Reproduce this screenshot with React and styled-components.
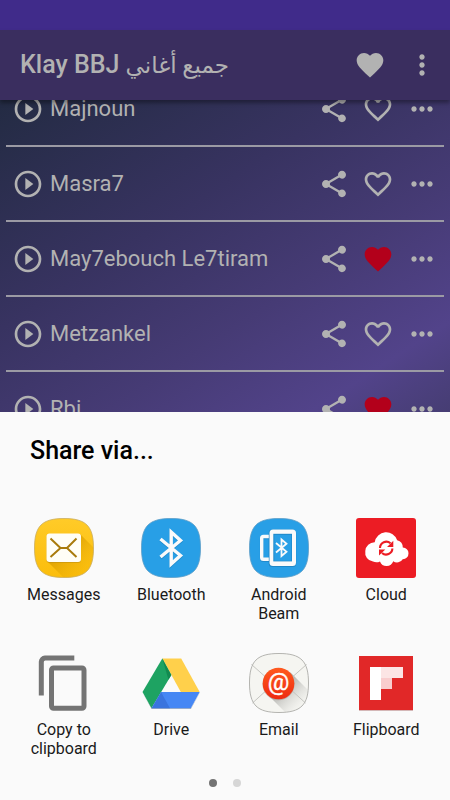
import React, { useState } from 'react';
import styled, { createGlobalStyle } from 'styled-components';
import {
  MdFavorite,
  MdFavoriteBorder,
  MdMoreHoriz,
  MdMoreVert,
  MdPlayCircleOutline,
  MdShare,
} from 'react-icons/md';

// Styles
const GlobalStyle = createGlobalStyle`
  * {
    box-sizing: border-box;
  }

  body {
    margin: 0;
    font-family: Roboto, "DejaVu Sans", sans-serif;
  }

  button {
    border: none;
    padding: 0;
    background: none;
    color: inherit;
    font: inherit;
    cursor: pointer;
  }
`;

const Screen = styled.div`
  display: flex;
  flex-direction: column;
  height: 100vh;
  overflow: hidden;
  color: #b2b2b2;
`;

const StatusBar = styled.div`
  flex: none;
  height: 30px;
  background-color: #402b8a;
`;

const AppBar = styled.header`
  position: relative;
  z-index: 1;
  flex: none;
  display: flex;
  align-items: center;
  gap: 20px;
  height: 70px;
  padding: 0 12px 0 20px;
  background-color: #3a2e5f;
  box-shadow: 0 3px 4px rgba(0, 0, 0, 0.35);
`;

const Title = styled.h1`
  flex: 1;
  margin: 0;
  font-size: 25px;
  line-height: 32px;
  font-weight: 500;
  white-space: nowrap;

  span {
    font-size: 23px;
    font-weight: 400;
  }
`;

const IconButton = styled.button`
  flex: none;
  display: flex;
  color: ${props => (props.$liked ? '#b3001b' : 'inherit')};

  svg {
    width: 32px;
    height: 32px;
  }
`;

const SongArea = styled.main`
  flex: 1;
  min-height: 0;
  overflow: hidden;
  background: linear-gradient(147deg, #232b43 0%, #383361 38%, #463b75 63%, #52438a 85%, #463d73 100%);
`;

/* The list is scrolled a little under the app bar */
const SongList = styled.ul`
  margin: -28px 6px 0;
  padding: 0;
  list-style: none;
`;

const SongRow = styled.li`
  display: flex;
  align-items: center;
  gap: 12px;
  height: 75px;
  padding: 0 6px;
  border-bottom: 2px solid #9b9aa4;
`;

const SongButton = styled.button`
  flex: 1;
  display: flex;
  align-items: center;
  gap: 6px;
  font-size: 22px;
  line-height: 32px;
  white-space: nowrap;

  svg {
    width: 32px;
    height: 32px;
  }
`;

const Sheet = styled.section`
  flex: none;
  padding: 25px 10px 13px;
  background-color: #fafafa;
  color: #000;
`;

const SheetTitle = styled.h2`
  margin: 0 20px 53px;
  font-size: 25px;
  line-height: 28px;
  font-weight: 500;
`;

const Targets = styled.div`
  display: grid;
  grid-template-columns: repeat(4, 1fr);
  row-gap: 30px;
`;

const Target = styled.button`
  display: flex;
  flex-direction: column;
  align-items: center;
  gap: 7px;

  svg {
    width: 60px;
    height: 60px;
  }
`;

const TargetLabel = styled.span`
  max-width: 80px;
  font-size: 16px;
  line-height: 19px;
  color: #1a1a1a;
`;

const Pager = styled.div`
  display: flex;
  justify-content: center;
  gap: 16px;
  margin-top: 21px;
`;

const PagerDot = styled.button`
  width: 8px;
  height: 8px;
  border-radius: 50%;
  background-color: ${props => (props.$active ? '#737373' : '#d6d6d6')};
`;

// Icons
const SQUIRCLE = 'M30 .5C52 .5 59.5 8 59.5 30S52 59.5 30 59.5.5 52 .5 30 8 .5 30 .5Z';

const MessagesIcon = () => (
  <svg viewBox="0 0 60 60" aria-hidden="true">
    <defs>
      <linearGradient id="msgBg" x1="0" y1="0" x2="0" y2="1">
        <stop offset="0" stopColor="#ffcb28" />
        <stop offset="1" stopColor="#fbbd0b" />
      </linearGradient>
      <linearGradient id="msgShade" x1="0" y1="0" x2="1" y2="1">
        <stop offset="0.3" stopColor="#d69a00" stopOpacity="0.85" />
        <stop offset="0.85" stopColor="#eeb000" stopOpacity="0.1" />
      </linearGradient>
      <clipPath id="msgClip">
        <path d={SQUIRCLE} />
      </clipPath>
    </defs>
    <path d={SQUIRCLE} fill="url(#msgBg)" />
    <path d="M13 43 46 16 60 30V60H30Z" fill="url(#msgShade)" clipPath="url(#msgClip)" />
    <path d={SQUIRCLE} fill="none" stroke="#c9ad62" strokeWidth=".8" />
    <rect x="12.5" y="16" width="34.5" height="29" rx="3" fill="#b98a10" opacity="0.5" />
    <rect x="12.5" y="15.5" width="34.5" height="28.5" rx="3" fill="#fffef6" />
    <path d="M16.5 20.5 26.5 30 16.5 39M42.5 20.5 33 30 42.5 39M26 30H33.5" fill="none" stroke="#a97b0c" strokeWidth="2" />
  </svg>
);

const BluetoothIcon = () => (
  <svg viewBox="0 0 60 60" aria-hidden="true">
    <path d={SQUIRCLE} fill="#289fe6" stroke="#5d9dc6" strokeWidth=".8" />
    <path d="M19.5 21 39.5 37.5 30.2 46V14L39.5 22.5 19.5 39" transform="translate(0 1)" fill="none" stroke="#1878b4" strokeWidth="3.4" opacity="0.5" />
    <path d="M19.5 21 39.5 37.5 30.2 46V14L39.5 22.5 19.5 39" fill="none" stroke="#fafafa" strokeWidth="3.4" />
  </svg>
);

const BeamIcon = () => (
  <svg viewBox="0 0 60 60" aria-hidden="true">
    <path d={SQUIRCLE} fill="#289fe6" stroke="#5d9dc6" strokeWidth=".8" />
    <path d="M20 18.5H14.5A1.8 1.8 0 0 0 12.7 20.3V39.5A1.8 1.8 0 0 0 14.5 41.3H20" transform="translate(0 1)" fill="none" stroke="#1878b4" strokeWidth="3.6" opacity="0.5" />
    <path d="M20 18.5H14.5A1.8 1.8 0 0 0 12.7 20.3V39.5A1.8 1.8 0 0 0 14.5 41.3H20" fill="none" stroke="#fafafa" strokeWidth="3.4" />
    <rect x="19.7" y="11.5" width="27.5" height="37.5" rx="3.5" fill="#1878b4" opacity="0.6" />
    <rect x="20.5" y="11.5" width="26.5" height="36.5" rx="3.5" fill="#fafafa" />
    <rect x="24.3" y="15.8" width="18.7" height="27.6" fill="#2089c9" />
    <rect x="25.3" y="16.8" width="17" height="26" fill="#289fe6" />
    <path d="M27 25 37.5 33.8 32.5 38V21.5L37.5 25.8 27 34.5" fill="none" stroke="#fafafa" strokeWidth="1.8" />
  </svg>
);

const CloudIcon = () => (
  <svg viewBox="0 0 60 60" aria-hidden="true">
    <rect width="60" height="60" rx="3" fill="#ec1c24" />
    <path
      d="M17 43.5A9 9 0 0 1 9.3 33A9.3 9.3 0 0 1 18.7 24.2A11.6 11.6 0 0 1 41.2 22.3A7.5 7.5 0 0 1 46.8 29.6A5.6 5.6 0 0 1 52.5 35.3A5.7 5.7 0 0 1 46.7 41.2A6.6 6.6 0 0 1 37.2 43.2A7 7 0 0 1 24 43.4A8 8 0 0 1 17 43.5Z"
      fill="#fff"
    />
    <path d="M24 30A6.3 6.3 0 0 1 34.5 25.3M36.4 30.5A6.3 6.3 0 0 1 26 35" fill="none" stroke="#ec1c24" strokeWidth="2.1" />
    <path d="M37.3 22.8V29H31ZM23 37.6V31.4H29.3Z" fill="#ec1c24" />
  </svg>
);

const CopyIcon = () => (
  <svg viewBox="0 0 60 60" aria-hidden="true">
    <path d="M7.3 42.5V8.8A4 4 0 0 1 11 5H40.3" fill="none" stroke="#747474" strokeWidth="5" />
    <rect x="17.5" y="15" width="32.5" height="40.3" rx="2" fill="none" stroke="#747474" strokeWidth="5" />
  </svg>
);

const DriveIcon = () => (
  <svg viewBox="0 0 60 60" aria-hidden="true">
    <path d="M1.5 39.8 10.5 55.7H50L58.8 39.8V39.4L50 55H10.5Z" fill="#9aa0aa" />
    <path d="M21.3 5.5H40.2L58.7 39H39.8Z" fill="#ffd04b" />
    <path d="M21.3 5.5 30.3 22 10.5 55.3 1.5 39Z" fill="#1ea362" />
    <path d="M20 39H58.7L49.8 55.3H10.5Z" fill="#4687f4" />
    <path d="M21.3 5.5 30.3 22 27.5 26.7Z" fill="#128a50" />
    <path d="M20 39 29 55.3H10.5Z" fill="#3268cf" opacity="0.6" />
  </svg>
);

const AtText = styled.text`
  font-family: Roboto, sans-serif;
  font-size: 24px;
  font-weight: 400;
  fill: #fff;
  stroke: #fff;
  stroke-width: 0.4px;
  text-anchor: middle;
`;

const EmailIcon = () => (
  <svg viewBox="0 0 60 60" aria-hidden="true">
    <defs>
      <linearGradient id="mailBall" x1="0" y1="0" x2="0" y2="1">
        <stop offset="0" stopColor="#ff5a1f" />
        <stop offset="1" stopColor="#ee2a10" />
      </linearGradient>
      <linearGradient id="mailShade" x1="0" y1="0" x2="1" y2="1">
        <stop offset="0.3" stopColor="#8c8c88" stopOpacity="0.75" />
        <stop offset="0.8" stopColor="#c8c8c4" stopOpacity="0.05" />
      </linearGradient>
      <clipPath id="mailClip">
        <path d={SQUIRCLE} />
      </clipPath>
    </defs>
    <path d={SQUIRCLE} fill="#f5f5f1" />
    <path d="M18.5 41.5 41.5 19.5 60 38V60H37Z" fill="url(#mailShade)" clipPath="url(#mailClip)" />
    <path d="M2.5 11.5 20 27M57.5 11.5 40 27M3.5 50 20 35M56.5 50 40 35" fill="none" stroke="#c4c4c0" />
    <path d={SQUIRCLE} fill="none" stroke="#b4b4b0" />
    <circle cx="29.5" cy="31.3" r="16" fill="#a8948e" opacity="0.6" />
    <circle cx="29.5" cy="30.5" r="15.8" fill="url(#mailBall)" />
    <AtText x="29.5" y="37">@</AtText>
  </svg>
);

const FlipboardIcon = () => (
  <svg viewBox="0 0 60 60" aria-hidden="true">
    <rect x="3" y="3" width="54" height="54" fill="#e12828" />
    <path d="M14 14H25V47H14Z" fill="#fff" />
    <path d="M25 14H47V25H25Z" fill="#fce5e5" />
    <path d="M25 25H36V36H25Z" fill="#f9cdce" />
    <path d="M3 57H57V57.8H3Z" fill="#c7a0a0" />
  </svg>
);

const initialSongs = [
  { name: 'Majnoun', liked: false },
  { name: 'Masra7', liked: false },
  { name: 'May7ebouch Le7tiram', liked: true },
  { name: 'Metzankel', liked: false },
  { name: 'Rbi', liked: true },
];

const targets = [
  { label: 'Messages', Icon: MessagesIcon },
  { label: 'Bluetooth', Icon: BluetoothIcon },
  { label: 'Android Beam', Icon: BeamIcon },
  { label: 'Cloud', Icon: CloudIcon },
  { label: 'Copy to clipboard', Icon: CopyIcon },
  { label: 'Drive', Icon: DriveIcon },
  { label: 'Email', Icon: EmailIcon },
  { label: 'Flipboard', Icon: FlipboardIcon },
];

const App = () => {
  const [songs, setSongs] = useState(initialSongs);
  const [page, setPage] = useState(0);

  const toggleLike = (name) => {
    setSongs((prev) => prev.map((song) => (
      song.name === name ? { ...song, liked: !song.liked } : song
    )));
  };

  return (
    <Screen>
      <GlobalStyle />
      <StatusBar />
      <AppBar>
        <Title>
          Klay BBJ <span lang="ar">جميع أغاني</span>
        </Title>
        <IconButton aria-label="Favorites"><MdFavorite /></IconButton>
        <IconButton aria-label="Menu"><MdMoreVert /></IconButton>
      </AppBar>

      <SongArea>
        <SongList>
          {songs.map((song) => (
            <SongRow key={song.name}>
              <SongButton>
                <MdPlayCircleOutline />
                {song.name}
              </SongButton>
              <IconButton aria-label="Share"><MdShare /></IconButton>
              <IconButton
                aria-label="Like"
                $liked={song.liked}
                onClick={() => toggleLike(song.name)}
              >
                {song.liked ? <MdFavorite /> : <MdFavoriteBorder />}
              </IconButton>
              <IconButton aria-label="More"><MdMoreHoriz /></IconButton>
            </SongRow>
          ))}
        </SongList>
      </SongArea>

      <Sheet>
        <SheetTitle>Share via...</SheetTitle>
        <Targets>
          {targets.map(({ label, Icon }) => (
            <Target key={label}>
              <Icon />
              <TargetLabel>{label}</TargetLabel>
            </Target>
          ))}
        </Targets>
        <Pager>
          {[0, 1].map((index) => (
            <PagerDot
              key={index}
              aria-label={`Page ${index + 1}`}
              $active={index === page}
              onClick={() => setPage(index)}
            />
          ))}
        </Pager>
      </Sheet>
    </Screen>
  );
};

export default App;
